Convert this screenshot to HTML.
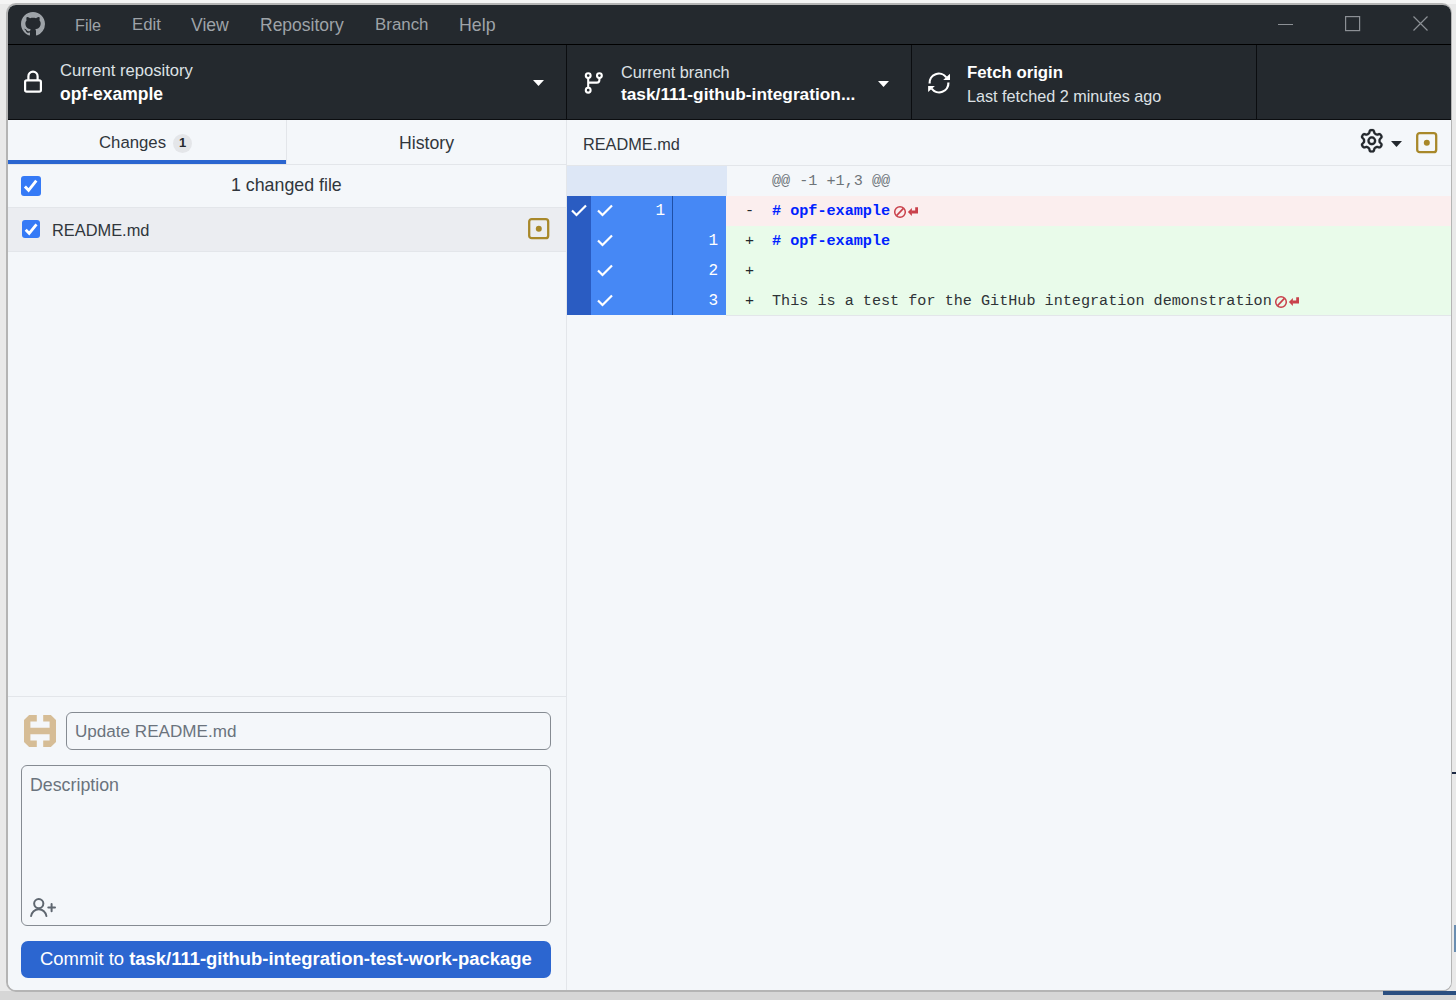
<!DOCTYPE html>
<html><head><meta charset="utf-8">
<style>
*{box-sizing:border-box;margin:0;padding:0}
html,body{width:1456px;height:1000px;overflow:hidden;background:#e9e9e9;font-family:"Liberation Sans",sans-serif}
.a{position:absolute}
.t{position:absolute;white-space:nowrap;line-height:20px}
.mono{font-family:"Liberation Mono",monospace}
#frame{position:absolute;left:6px;top:3px;width:1446px;height:989px;border:2px solid #b4b4b4;border-right-width:1px;border-radius:10px;background:#f4f7fa}
#app{position:absolute;left:0;top:0;width:1456px;height:1000px;clip-path:inset(5px 5px 10px 8px round 8px);background:#f4f7fa}
.menu{color:#9ea3a8;font-size:17px}
.lbl{color:#dde1e5;font-size:16.5px}
.val{color:#fff;font-weight:bold}
svg{position:absolute;overflow:visible}
</style></head><body>
<div class="a" style="left:0;top:0;width:1456px;height:4px;background:#f4f4f4"></div>
<div class="a" style="left:0;top:991px;width:1456px;height:9px;background:#d6d6d6"></div>
<div id="frame"></div>
<div id="app">
  <!-- title bar -->
  <div class="a" style="left:0;top:0;width:1456px;height:120px;background:#24292e"></div>
  <div class="a" style="left:0;top:44px;width:1456px;height:1px;background:#000"></div>
  <div class="a" style="left:0;top:119px;width:1456px;height:1px;background:#0b0d10"></div>
  <div class="a" style="left:566px;top:45px;width:1px;height:75px;background:#0b0d10"></div>
  <div class="a" style="left:911px;top:45px;width:1px;height:75px;background:#0b0d10"></div>
  <div class="a" style="left:1256px;top:45px;width:1px;height:75px;background:#0b0d10"></div>

  <svg style="left:21px;top:12px" width="24" height="24" viewBox="0 0 16 16"><path fill="#9ea3a8" d="M8 0C3.58 0 0 3.580 0 8c0 3.54 2.29 6.53 5.47 7.59.4.07.55-.17.55-.38 0-.19-.01-.82-.01-1.490-2.01.37-2.530-.49-2.690-.94-.09-.23-.48-.94-.82-1.13-.28-.15-.68-.52-.01-.53.63-.01 1.08.58 1.23.82.72 1.21 1.87.87 2.33.66.07-.52.28-.87.51-1.07-1.78-.2-3.64-.89-3.64-3.95 0-.87.31-1.59.82-2.15-.08-.2-.36-1.02.08-2.12 0 0 .67-.21 2.2.82.64-.18 1.32-.27 2-.27.68 0 1.36.09 2 .27 1.53-1.04 2.2-.82 2.2-.82.44 1.1.16 1.92.08 2.12.51.56.82 1.27.82 2.15 0 3.07-1.87 3.75-3.65 3.95.29.25.54.73.54 1.48 0 1.07-.01 1.93-.01 2.2 0 .21.15.46.55.38A8.013 8.013 0 0016 8c0-4.42-3.58-8-8-8z"/></svg>
  <div class="t menu" style="left:75px;top:15px;font-size:16.2px">File</div>
  <div class="t menu" style="left:132px;top:15px;font-size:16.8px">Edit</div>
  <div class="t menu" style="left:191px;top:15px;font-size:17.6px">View</div>
  <div class="t menu" style="left:260px;top:15px;font-size:17.5px">Repository</div>
  <div class="t menu" style="left:375px;top:15px;font-size:16.9px">Branch</div>
  <div class="t menu" style="left:459px;top:15px;font-size:17.8px">Help</div>
  <svg style="left:1278px;top:16px" width="15" height="15"><path d="M0 8.5H15" stroke="#8c9095" stroke-width="1.2"/></svg>
  <svg style="left:1345px;top:16px" width="15" height="15"><rect x="0.6" y="0.6" width="14" height="14" fill="none" stroke="#8c9095" stroke-width="1.2"/></svg>
  <svg style="left:1413px;top:16px" width="15" height="15"><path d="M0.5 0.5L14.5 14.5M14.5 0.5L0.5 14.5" fill="none" stroke="#8c9095" stroke-width="1.2"/></svg>

  <!-- toolbar -->
  <svg style="left:0;top:0" width="1" height="1"><rect x="25.1" y="80.3" width="15.8" height="11.3" rx="1.6" fill="none" stroke="#fff" stroke-width="2.2"/><path d="M28.4 80.3V76.2a4.6 4.6 0 0 1 9.2 0V80.3" fill="none" stroke="#fff" stroke-width="2.2"/></svg>
  <div class="t lbl" style="left:60px;top:61px;font-size:16.6px">Current repository</div>
  <div class="t val" style="left:60px;top:83.5px;font-size:17.5px">opf-example</div>
  <svg style="left:533px;top:80px" width="11" height="6"><path d="M0 0H11L5.5 6Z" fill="#fff"/></svg>

  <svg style="left:0;top:0" width="1" height="1"><g fill="none" stroke="#fff" stroke-width="2.1"><circle cx="588.2" cy="75.6" r="2.4"/><circle cx="599.4" cy="75.6" r="2.4"/><circle cx="588.2" cy="90.2" r="2.4"/><path d="M588.2 78V87.8M599.4 78V80a2.6 2.6 0 0 1-2.6 2.6H588.2"/></g></svg>
  <div class="t lbl" style="left:621px;top:62px;font-size:16.3px">Current branch</div>
  <div class="t val" style="left:621px;top:84px;font-size:17.3px">task/111-github-integration...</div>
  <svg style="left:878px;top:81px" width="11" height="6"><path d="M0 0H11L5.5 6Z" fill="#fff"/></svg>

  <svg style="left:0;top:0" width="1" height="1"><g fill="#fff"><path d="M929.6 83.5A9.3 9.3 0 0 1 946.3 77.3" fill="none" stroke="#fff" stroke-width="2.2"/><path d="M950 73.8V80H943.2Z"/><path d="M948.4 82.5A9.3 9.3 0 0 1 931.7 88.7" fill="none" stroke="#fff" stroke-width="2.2"/><path d="M928.1 86H934.9L928.1 92Z"/></g></svg>
  <div class="t val" style="left:967px;top:62.8px;font-size:16.8px">Fetch origin</div>
  <div class="t lbl" style="left:967px;top:86px;font-size:16.2px">Last fetched 2 minutes ago</div>

  <!-- sidebar -->
  <div class="a" style="left:566px;top:120px;width:1px;height:880px;background:#e3e6ea"></div>
  <div class="a" style="left:286px;top:120px;width:1px;height:44px;background:#e3e6ea"></div>
  <div class="a" style="left:0;top:164px;width:566px;height:1px;background:#e3e6ea"></div>
  <div class="a" style="left:8px;top:160px;width:278px;height:4px;background:#2b66d0"></div>
  <div class="t" style="left:99px;top:133px;font-size:16.75px;color:#30363c">Changes</div>
  <div class="a" style="left:173px;top:133.5px;width:19px;height:19px;border-radius:50%;background:#e4e6e9"></div>
  <div class="t" style="left:173px;top:133px;width:19px;text-align:center;font-size:13px;font-weight:bold;color:#24292e">1</div>
  <div class="t" style="left:399px;top:133px;font-size:17.7px;color:#30363c">History</div>

  <div class="a" style="left:0;top:207px;width:566px;height:1px;background:#e3e6ea"></div>
  <div class="a" style="left:21px;top:176px;width:19.5px;height:19.5px;border-radius:3px;background:#357af6"></div>
  <svg style="left:21px;top:176px" width="20" height="20"><path d="M3.9 10.4L7.6 14.3L15.3 4.6" fill="none" stroke="#fff" stroke-width="2.9"/></svg>
  <div class="t" style="left:231px;top:175.4px;font-size:17.8px;color:#30363c">1 changed file</div>

  <div class="a" style="left:0;top:208px;width:566px;height:43px;background:#ebedf1"></div>
  <div class="a" style="left:0;top:251px;width:566px;height:1px;background:#e3e6ea"></div>
  <div class="a" style="left:22px;top:220px;width:18px;height:18px;border-radius:3px;background:#357af6"></div>
  <svg style="left:22px;top:220px" width="19" height="18"><path d="M3.7 9.7L7.2 13.4L14.5 4.3" fill="none" stroke="#fff" stroke-width="2.8"/></svg>
  <div class="t" style="left:52px;top:220.4px;font-size:16.4px;color:#30363c">README.md</div>
  <svg style="left:528px;top:218px" width="22" height="22"><rect x="1.2" y="1.2" width="19" height="19" rx="2.5" fill="none" stroke="#a8882a" stroke-width="2.3"/><circle cx="10.8" cy="10.8" r="3" fill="#a8882a"/></svg>

  <!-- commit area -->
  <div class="a" style="left:0;top:696px;width:566px;height:1px;background:#e3e6ea"></div>
  <svg style="left:24px;top:715px" width="32" height="32" viewBox="0 0 5 5"><path fill="#d6bd96" d="M0.8 0H2V1H1V4H2V5H0.8L0 4.2V0.8Z M3 0H4.2L5 0.8V4.2L4.2 5H3V4H4V1H3Z M1 2H4V3H1Z"/></svg>
  <div class="a" style="left:66px;top:712px;width:485px;height:37.5px;border:1px solid #858b92;border-radius:6px"></div>
  <div class="t" style="left:75px;top:722px;font-size:17.1px;color:#6a737d">Update README.md</div>
  <div class="a" style="left:21px;top:765px;width:530px;height:161px;border:1px solid #858b92;border-radius:6px"></div>
  <div class="t" style="left:30px;top:775.3px;font-size:17.8px;color:#6a737d">Description</div>
  <svg style="left:0;top:0" width="1" height="1"><g fill="none" stroke="#5f6770" stroke-width="2" stroke-linecap="round"><circle cx="38.75" cy="903.6" r="4.6"/><path d="M31.1 916A7.7 7.7 0 0 1 46.4 916"/><path d="M48.3 907.6H55M51.6 904.1V911.2"/></g></svg>
  <div class="a" style="left:21px;top:941px;width:530px;height:37px;border-radius:7px;background:#2c66d0"></div>
  <div class="t" style="left:40px;top:949px;font-size:18.45px;color:#fff">Commit to <b>task/111-github-integration-test-work-package</b></div>

  <!-- diff header -->
  <div class="a" style="left:567px;top:165px;width:890px;height:1px;background:#e3e6ea"></div>
  <div class="t" style="left:583px;top:134.2px;font-size:16.3px;color:#30363c">README.md</div>
  <svg style="left:1360.2px;top:129.3px" width="23.6" height="23.6" viewBox="0 0 16 16" preserveAspectRatio="none"><path fill="#24292e" stroke="#24292e" stroke-width="0.12" d="M8 0a8.2 8.2 0 0 1 .701.031C9.444.095 9.99.645 10.16 1.29l.288 1.107c.018.066.079.158.212.224.231.114.454.243.668.386.123.082.233.09.299.071l1.103-.303c.644-.176 1.392.021 1.82.63.27.385.506.792.704 1.218.315.675.111 1.422-.364 1.891l-.814.806c-.049.048-.098.147-.088.294.016.257.016.515 0 .772-.01.147.038.246.088.294l.814.806c.475.469.679 1.216.364 1.891a7.977 7.977 0 0 1-.704 1.217c-.428.61-1.176.807-1.82.63l-1.102-.302c-.067-.019-.177-.011-.3.071a5.909 5.909 0 0 1-.668.386c-.133.066-.194.158-.211.224l-.29 1.106c-.168.646-.715 1.196-1.458 1.26a8.006 8.006 0 0 1-1.402 0c-.743-.064-1.289-.614-1.458-1.26l-.289-1.106c-.018-.066-.079-.158-.212-.224a5.738 5.738 0 0 1-.668-.386c-.123-.082-.233-.09-.299-.071l-1.103.303c-.644.176-1.392-.021-1.820-.63a8.12 8.12 0 0 1-.704-1.218c-.315-.675-.111-1.422.363-1.891l.815-.806c.05-.048.098-.147.088-.294a6.214 6.214 0 0 1 0-.772c.01-.147-.038-.246-.088-.294l-.815-.806C.635 6.045.431 5.298.746 4.623a7.92 7.92 0 0 1 .704-1.217c.428-.61 1.176-.807 1.82-.63l1.102.302c.067.019.177.011.3-.071.214-.143.437-.272.668-.386.133-.066.194-.158.211-.224l.29-1.106C6.009.645 6.556.095 7.299.03 7.53.01 7.764 0 8 0Zm-.571 1.525c-.036.003-.108.036-.137.146l-.289 1.105c-.147.561-.549.967-.998 1.189-.173.086-.34.183-.5.29-.417.278-.97.423-1.529.27l-1.103-.303c-.109-.03-.175.016-.195.045-.22.312-.412.644-.573.99-.014.031-.021.11.059.19l.815.806c.411.406.562.957.53 1.456a4.709 4.709 0 0 0 0 .582c.032.499-.119 1.05-.53 1.456l-.815.806c-.081.08-.073.159-.059.19.162.346.353.677.573.989.02.03.085.076.195.046l1.102-.303c.56-.153 1.113-.008 1.53.27.161.107.328.204.501.29.447.222.85.629.997 1.189l.289 1.105c.029.109.101.143.137.146a6.6 6.6 0 0 0 1.142 0c.036-.003.108-.036.137-.146l.289-1.105c.147-.561.549-.967.998-1.189.173-.086.34-.183.5-.29.417-.278.97-.423 1.529-.27l1.103.303c.109.029.175-.016.195-.045.22-.313.411-.644.573-.99.014-.031.021-.11-.059-.19l-.815-.806c-.411-.406-.562-.957-.53-1.456a4.709 4.709 0 0 0 0-.582c-.032-.499.119-1.05.53-1.456l.815-.806c.081-.08.073-.159.059-.19a6.464 6.464 0 0 0-.573-.989c-.02-.03-.085-.076-.195-.046l-1.102.303c-.56.153-1.113.008-1.530-.27a4.44 4.44 0 0 0-.501-.29c-.447-.222-.85-.629-.997-1.189l-.289-1.105c-.029-.11-.101-.143-.137-.146a6.6 6.6 0 0 0-1.142 0ZM11 8a3 3 0 1 1-6 0 3 3 0 0 1 6 0ZM9.5 8a1.5 1.5 0 1 0-3.001.001A1.5 1.5 0 0 0 9.5 8Z"/></svg>
  <svg style="left:1390.5px;top:141px" width="11" height="6"><path d="M0 0H11L5.5 6Z" fill="#24292e"/></svg>
  <svg style="left:1416px;top:132px" width="22" height="22"><rect x="1.2" y="1.2" width="19" height="19" rx="2.5" fill="none" stroke="#a8882a" stroke-width="2.3"/><circle cx="10.8" cy="10.8" r="3" fill="#a8882a"/></svg>


  <!-- hunk header -->
  <div class="a" style="left:567px;top:166px;width:160px;height:30px;background:#dde7f6"></div>
  <div class="t mono" style="left:772px;top:171px;font-size:15.15px;color:#6e7479">@@ -1 +1,3 @@</div>
  <!-- rows bg -->
  <div class="a" style="left:726px;top:196px;width:730px;height:30px;background:#fbeeee"></div>
  <div class="a" style="left:726px;top:226px;width:730px;height:89px;background:#e9fbea"></div>
  <div class="a" style="left:726px;top:315px;width:730px;height:1px;background:#e3e6ea"></div>
  <div class="a" style="left:567px;top:196px;width:24px;height:119px;background:#2a5cc2"></div>
  <div class="a" style="left:591px;top:196px;width:135px;height:119px;background:#4688f5"></div>
  <div class="a" style="left:672px;top:196px;width:1px;height:119px;background:#1f4fa6"></div>
  <svg style="left:0;top:0" width="1" height="1"><g fill="none" stroke="#fff" stroke-width="2.2">
    <path d="M572 210.5L576.5 215L586 205.5"/>
    <path d="M598 210.5L602.5 215L612 205.5"/>
    <path d="M598 240.5L602.5 245L612 235.5"/>
    <path d="M598 270.5L602.5 275L612 265.5"/>
    <path d="M598 300.5L602.5 305L612 295.5"/>
  </g></svg>
  <div class="t mono" style="left:619px;top:200.5px;width:46px;text-align:right;font-size:16px;color:#fff">1</div>
  <div class="t mono" style="left:672px;top:230.5px;width:46px;text-align:right;font-size:16px;color:#fff">1</div>
  <div class="t mono" style="left:672px;top:260.5px;width:46px;text-align:right;font-size:16px;color:#fff">2</div>
  <div class="t mono" style="left:672px;top:290.5px;width:46px;text-align:right;font-size:16px;color:#fff">3</div>
  <div class="t mono" style="left:745px;top:201px;font-size:15.15px;color:#24292e">-</div>
  <div class="t mono" style="left:745px;top:231px;font-size:15.15px;color:#24292e">+</div>
  <div class="t mono" style="left:745px;top:261px;font-size:15.15px;color:#24292e">+</div>
  <div class="t mono" style="left:745px;top:291px;font-size:15.15px;color:#24292e">+</div>
  <div class="t mono" style="left:772px;top:201px;font-size:15.15px;color:#0022ff;font-weight:bold">#&nbsp;opf-example</div>
  <div class="t mono" style="left:772px;top:231px;font-size:15.15px;color:#0022ff;font-weight:bold">#&nbsp;opf-example</div>
  <div class="t mono" style="left:772px;top:291px;font-size:15.15px;color:#2f3337">This is a test for the GitHub integration demonstration</div>
  <svg style="left:0;top:0" width="1" height="1"><g transform="translate(894,206)" fill="#c9404a"><circle cx="6" cy="6" r="5.3" fill="none" stroke="#c9404a" stroke-width="1.5"/><path d="M9.4 2.4L2.6 9.6" stroke="#c9404a" stroke-width="1.6"/><path d="M21.2 1.2H24V7.4H17.5V4.4H21.2Z"/><path d="M13.9 5.9L17.9 1.9V10.1Z"/></g></svg>
  <svg style="left:0;top:0" width="1" height="1"><g transform="translate(1275,296)" fill="#c9404a"><circle cx="6" cy="6" r="5.3" fill="none" stroke="#c9404a" stroke-width="1.5"/><path d="M9.4 2.4L2.6 9.6" stroke="#c9404a" stroke-width="1.6"/><path d="M21.2 1.2H24V7.4H17.5V4.4H21.2Z"/><path d="M13.9 5.9L17.9 1.9V10.1Z"/></g></svg>
</div>
<div class="a" style="left:1383px;top:991px;z-index:5;width:73px;height:4px;background:#2b4f80"></div>
<div class="a" style="left:1452px;top:772px;width:4px;height:2px;background:#1d2a44;z-index:5"></div>
<div class="a" style="left:1454px;top:925px;width:2px;height:27px;background:#6a8db0;z-index:5"></div>
</body></html>
